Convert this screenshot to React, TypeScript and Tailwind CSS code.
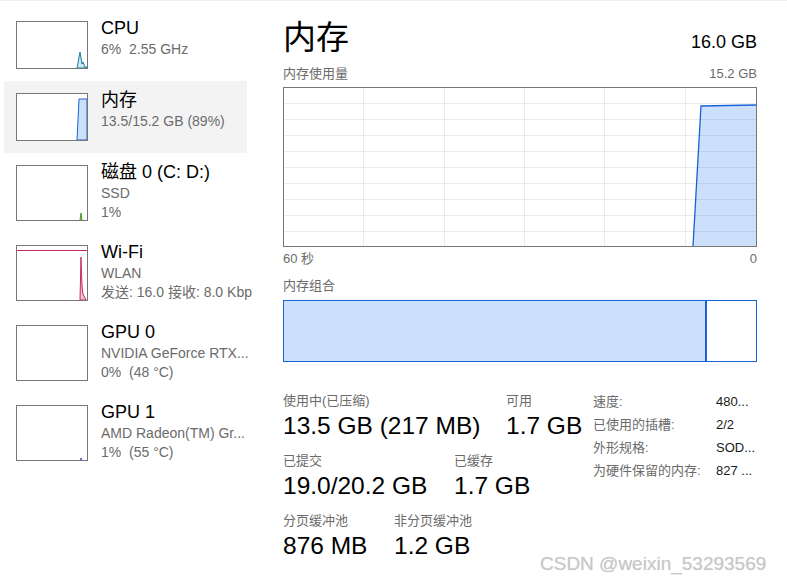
import React from "react";

type Item = {
  title: string;
  lines: string[];
  tall: boolean;
  selected?: boolean;
  graph: React.ReactNode;
};

const items: Item[] = [
  {
    title: "CPU",
    lines: ["6%  2.55 GHz"],
    tall: false,
    graph: (
      <polygon
        points="60,46 63,30 65,42 66,40 68,45 70,45 70,46"
        fill="#cce8f0"
        stroke="#1e7fa0"
        strokeWidth="1"
      />
    ),
  },
  {
    title: "内存",
    lines: ["13.5/15.2 GB (89%)"],
    tall: false,
    selected: true,
    graph: (
      <polygon points="60,46 62,5 70,5 70,46" fill="#cce0fc" stroke="#1a62d5" strokeWidth="1" />
    ),
  },
  {
    title: "磁盘 0 (C: D:)",
    lines: ["SSD", "1%"],
    tall: true,
    graph: <polygon points="63,54 64,47 65,54" fill="#b9dc9b" stroke="#4c9a1f" strokeWidth="1" />,
  },
  {
    title: "Wi-Fi",
    lines: ["WLAN", "发送: 16.0 接收: 8.0 Kbps"],
    tall: true,
    graph: (
      <>
        <line x1="0" y1="4.5" x2="70" y2="4.5" stroke="#c42b5f" strokeWidth="1" />
        <polygon
          points="63,54 64,11 65,40 66,48 69,54"
          fill="#f0c2d2"
          stroke="#c42b5f"
          strokeWidth="1"
        />
      </>
    ),
  },
  {
    title: "GPU 0",
    lines: ["NVIDIA GeForce RTX...", "0%  (48 °C)"],
    tall: true,
    graph: null,
  },
  {
    title: "GPU 1",
    lines: ["AMD Radeon(TM) Gr...", "1%  (55 °C)"],
    tall: true,
    graph: <rect x="63" y="52" width="2" height="2" fill="#8a5cd6" />,
  },
];

function SideItem({ item }: { item: Item }) {
  return (
    <div
      className={`flex w-[243px] ml-[4px] ${item.tall ? "h-[80px]" : "h-[72px]"} ${
        item.selected ? "bg-[#f3f3f3]" : ""
      }`}
    >
      <div
        className={`ml-[12px] mt-[12px] w-[72px] shrink-0 border border-[#767676] bg-white ${
          item.tall ? "h-[56px]" : "h-[48px]"
        }`}
      >
        <svg width="70" height={item.tall ? 54 : 46} className="block">
          {item.graph}
        </svg>
      </div>
      <div className="ml-[13px] mt-[7px] whitespace-nowrap">
        <div className="text-[18px] leading-[24px] text-black">{item.title}</div>
        {item.lines.map((l, i) => (
          <div key={i} className="text-[14px] leading-[19px] text-[#6b6b6b] whitespace-pre">
            {l}
          </div>
        ))}
      </div>
    </div>
  );
}

function UsageChart() {
  const vx = [79, 160, 240, 320, 401];
  const hy = [15, 31, 47, 63, 79, 95, 111, 127, 143];
  return (
    <div className="h-[160px] border border-[#767676]">
      <svg width="472" height="158" className="block">
        <polygon points="409,158 417,18 472,17 472,158" fill="#cce0fc" />
        {vx.map((x) => (
          <line key={x} x1={x + 0.5} y1="0" x2={x + 0.5} y2="158" stroke="rgba(0,0,0,0.08)" />
        ))}
        {hy.map((y) => (
          <line key={y} x1="0" y1={y + 0.5} x2="472" y2={y + 0.5} stroke="rgba(0,0,0,0.08)" />
        ))}
        <polyline points="409,158 417,18 472,17" fill="none" stroke="#1a62d5" strokeWidth="1.3" />
      </svg>
    </div>
  );
}

function Stat({ label, value, w }: { label: string; value: string; w?: string }) {
  return (
    <div className={w}>
      <div className="text-[13px] leading-[18px] text-[#6b6b6b]">{label}</div>
      <div className="text-[24.5px] leading-[32px] text-black whitespace-nowrap">{value}</div>
    </div>
  );
}

const specs = [
  ["速度:", "480..."],
  ["已使用的插槽:", "2/2"],
  ["外形规格:", "SOD..."],
  ["为硬件保留的内存:", "827 ..."],
];

export default function App() {
  return (
    <div className="relative w-[787px] h-[583px] overflow-hidden bg-white border-t border-[#f0f0f0] font-['Liberation_Sans','Noto_Sans_CJK_SC',sans-serif]">
      <div className="flex">
        <div className="w-[252px] shrink-0 overflow-hidden pt-[8px]">
          {items.map((it) => (
            <SideItem key={it.title} item={it} />
          ))}
        </div>

        <div className="ml-[31px] w-[474px] pt-[14px]">
          <div className="flex justify-between h-[46px]">
            <div className="text-[33px] leading-[46px] text-black">内存</div>
            <div className="self-end mb-[7px] text-[18px] leading-[24px] text-black">16.0 GB</div>
          </div>
          <div className="flex justify-between items-center h-[26px] text-[13px] text-[#6b6b6b]">
            <span>内存使用量</span>
            <span>15.2 GB</span>
          </div>
          <UsageChart />
          <div className="flex justify-between items-center h-[24px] text-[13px] text-[#6b6b6b]">
            <span>60 秒</span>
            <span>0</span>
          </div>
          <div className="flex items-center h-[29px] text-[13px] text-[#6b6b6b]">内存组合</div>
          <div className="flex h-[62px] border border-[#1a62d5]">
            <div className="w-[423px] bg-[#cce0fc] border-r-2 border-[#1a62d5]" />
          </div>

          <div className="flex mt-[30px]">
            <div className="w-[310px] shrink-0">
              <div className="flex mb-[10px]">
                <Stat label="使用中(已压缩)" value="13.5 GB (217 MB)" w="w-[223px]" />
                <Stat label="可用" value="1.7 GB" />
              </div>
              <div className="flex mb-[10px]">
                <Stat label="已提交" value="19.0/20.2 GB" w="w-[171px]" />
                <Stat label="已缓存" value="1.7 GB" />
              </div>
              <div className="flex">
                <Stat label="分页缓冲池" value="876 MB" w="w-[111px]" />
                <Stat label="非分页缓冲池" value="1.2 GB" />
              </div>
            </div>
            <div className="-mt-[2px] text-[13px]">
              {specs.map(([k, v]) => (
                <div key={k} className="flex items-center h-[23px]">
                  <span className="w-[123px] text-[#6b6b6b]">{k}</span>
                  <span className="text-[#1a1a1a]">{v}</span>
                </div>
              ))}
            </div>
          </div>
        </div>
      </div>

      <div className="absolute left-[540px] top-[551px] text-[19px] leading-[24px] text-[#c8c8c8] whitespace-nowrap [text-shadow:0_0_1px_rgba(0,0,0,0.15)]">
        CSDN @weixin_53293569
      </div>
    </div>
  );
}
